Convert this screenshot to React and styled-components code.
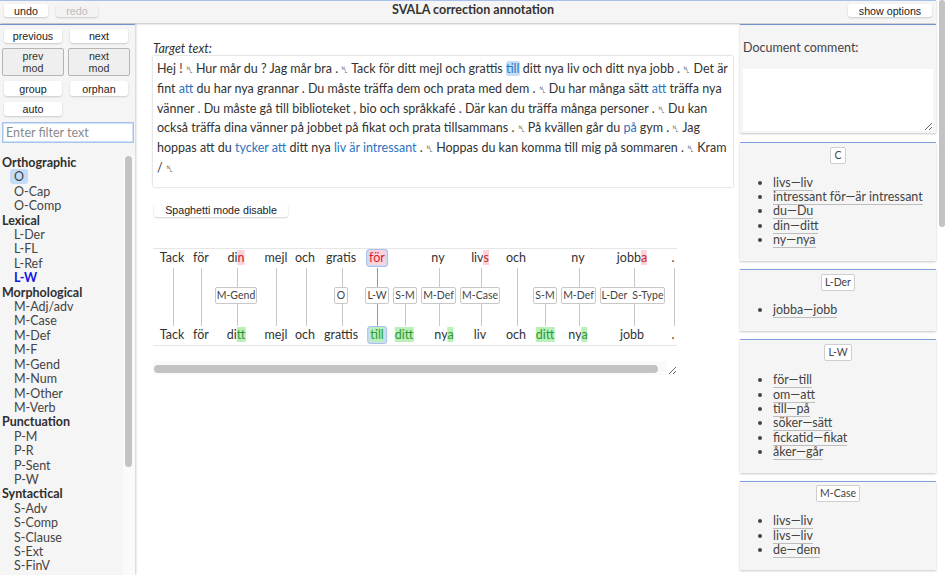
import React from 'react';
import styled, { createGlobalStyle, css } from 'styled-components';

const GlobalStyle = createGlobalStyle`
  html, body { margin: 0; padding: 0; background: #fff; overflow: hidden; }
  body { font-family: Lato, "Liberation Sans", sans-serif; color: #333; }
`;

const Page = styled.div`
  position: relative;
  height: 575px;
  overflow: hidden;
  box-sizing: border-box;
  padding-right: 10px;
  background: #fff;
`;

const PageScrollThumb = styled.div`
  position: absolute;
  top: 0;
  right: 1px;
  width: 6px;
  height: 227px;
  border-radius: 3px;
  background: #c3c3c3;
`;

const Header = styled.header`
  height: 23px;
  box-sizing: border-box;
  border-top: 1px solid #a9c1ef;
  background: #f5f5f5;
  box-shadow: 0 1px 2px rgba(0, 0, 0, 0.25);
  display: flex;
  align-items: flex-start;
  justify-content: space-between;
  padding: 3px 4px 0;
  position: relative;
`;

const HeaderGroup = styled.div`
  display: flex;
  gap: 8px;
`;

const Title = styled.h1`
  position: absolute;
  left: 0;
  right: -10px;
  top: 1px;
  margin: 0;
  text-align: center;
  font-size: 12.5px;
  line-height: 15px;
  font-weight: 700;
  color: #333;
`;

const Button = styled.button`
  font-family: "Liberation Sans", Arial, sans-serif;
  font-size: 10.7px;
  line-height: 12px;
  color: #222;
  height: ${p => p.$h || 14}px;
  width: ${p => (p.$w ? `${p.$w}px` : 'auto')};
  margin: ${p => p.$margin || 0};
  padding: 0;
  border: 0;
  border-radius: 3px;
  background: #fff;
  box-shadow: 0 1px 2px rgba(0, 0, 0, 0.18);
  ${p => p.disabled && css`
    color: #bbb;
    background: #f3f3f3;
  `}
`;

const ModButton = styled(Button)`
  height: 28px;
  background: #efefef;
  border: 1px solid #b5b5b5;
  box-shadow: none;
  border-radius: 2px;
  color: #333;
`;

const Columns = styled.div`
  display: flex;
  align-items: flex-start;
  margin-top: 1px;
`;

const LeftPanel = styled.aside`
  width: 135px;
  height: 551px;
  flex: none;
  box-sizing: border-box;
  border-top: 1px solid #7f9fde;
  background: #f5f5f5;
  box-shadow: 1px 0 2px rgba(0, 0, 0, 0.2);
  display: flex;
  flex-direction: column;
  padding-top: 4px;
`;

const ButtonGrid = styled.div`
  display: grid;
  grid-template-columns: 62px 62px;
  column-gap: 4px;
  row-gap: 5px;
  padding-left: 2px;
`;

const FilterInput = styled.input`
  display: block;
  box-sizing: border-box;
  width: 132px;
  height: 21px;
  margin: 6px 0 13px 2px;
  padding: 0 3px;
  border: 1px solid #a5c4ee;
  outline: 1px solid #cfe0f7;
  outline-offset: -2px;
  background: #fff;
  font-family: Lato, sans-serif;
  font-size: 12.5px;
  &::placeholder { color: #8a8a8a; opacity: 1; }
`;

const TagList = styled.div`
  position: relative;
  flex: 1;
  min-height: 0;
  overflow: hidden;
  padding-left: 2px;
  font-size: 12.5px;
  line-height: 14.4px;
`;

const TagTrack = styled.div`
  position: absolute;
  top: 0;
  bottom: 0;
  right: 0;
  width: 12px;
  background: #fafafa;
`;

const TagThumb = styled.div`
  position: absolute;
  top: 0;
  left: 2px;
  width: 7px;
  height: 311px;
  border-radius: 4px;
  background: #c3c3c3;
`;

const TagGroup = styled.div`
  font-weight: 700;
  color: #2f2f2f;
`;

const Tag = styled.div`
  padding-left: 12px;
  color: ${p => (p.$active ? '#1414e6' : '#444')};
  font-weight: ${p => (p.$active ? 700 : 400)};
`;

const TagMark = styled.span`
  background: ${p => (p.$on ? '#c5dcf8' : 'transparent')};
  border-radius: 3px;
  padding: 0 ${p => (p.$on ? 4 : 0)}px;
  margin-left: ${p => (p.$on ? -4 : 0)}px;
`;

const Main = styled.main`
  flex: 1;
  min-width: 0;
  box-sizing: border-box;
  padding: 17px 7px 0 18px;
`;

const TargetLabel = styled.div`
  font-size: 12.5px;
  line-height: 15px;
  font-style: italic;
  color: #333;
`;

const TargetBox = styled.div`
  box-sizing: border-box;
  height: 131px;
  padding: 4px 4px 2px;
  background: #fff;
  box-shadow: 0 0 2px rgba(0, 0, 0, 0.28);
  font-size: 12.5px;
  line-height: 18.75px;
  color: #333;
`;

const Nl = styled.span`
  font-family: "DejaVu Sans", sans-serif;
  font-size: 9px;
  color: #555;
`;

const Changed = styled.span`
  color: #2a74c0;
  ${p => p.$selected && css`
    background: #c9def6;
    border-radius: 2px;
  `}
`;

const SpaghettiRow = styled.div`
  margin: 16px 0 31px 1px;
  line-height: 0;
`;

const Spaghetti = styled.div`
  position: relative;
  width: 524px;
  height: 127px;
  overflow: hidden;
  resize: both;
`;

const Canvas = styled.div`
  position: relative;
  width: 524px;
  height: 98px;
  box-sizing: border-box;
  border-top: 1px solid #e6e6e6;
  border-bottom: 1px solid #e6e6e6;
  font-size: 12.5px;
  line-height: 16px;
`;

const HScrollTrack = styled.div`
  position: absolute;
  left: 0;
  top: 113px;
  width: 514px;
  height: 14px;
  background: #fafafa;
`;

const HScrollThumb = styled.div`
  position: absolute;
  left: 1px;
  top: 4px;
  width: 504px;
  height: 8px;
  border-radius: 4px;
  background: #c3c3c3;
`;

const Word = styled.span`
  position: absolute;
  left: ${p => p.$x}px;
  top: ${p => p.$y}px;
  transform: translateX(-50%);
  white-space: nowrap;
  color: #333;
  ${p => p.$selected && css`
    padding: 0 2px;
    background: #cbdcf5;
    border: 1px solid #a9c1ea;
    border-radius: 3px;
    margin-top: -1px;
  `}
`;

const Del = styled.span`
  color: #d9202c;
  background: #fbd3da;
`;

const Ins = styled.span`
  color: #2c9a34;
  background: #b9efb9;
`;

const Link = styled.span`
  position: absolute;
  left: ${p => p.$x}px;
  top: ${p => p.$top}px;
  height: ${p => p.$h}px;
  width: 1px;
  background: ${p => (p.$dark ? '#999' : '#c8c8c8')};
`;

const Label = styled.span`
  position: absolute;
  left: ${p => p.$x}px;
  top: 38px;
  width: ${p => p.$w}px;
  height: 17px;
  box-sizing: border-box;
  display: flex;
  align-items: center;
  justify-content: center;
  gap: 5px;
  white-space: nowrap;
  background: #fff;
  border: 1px solid #c8c8c8;
  border-radius: 2px;
  font-size: 10.5px;
  line-height: 15px;
  color: #444;
`;

const RightPanel = styled.aside`
  width: 196px;
  flex: none;
  display: flex;
  flex-direction: column;
  gap: 8.6px;
`;

const Card = styled.section`
  background: #f5f5f5;
  border-top: 1px solid #7f9fde;
  box-shadow: 0 1px 2px rgba(0, 0, 0, 0.22);
  box-sizing: border-box;
`;

const CommentCard = styled(Card)`
  height: 109px;
  padding: 15px 3px 0;
`;

const CommentLabel = styled.div`
  font-size: 12.5px;
  line-height: 16px;
  color: #444;
`;

const CommentBox = styled.textarea`
  display: block;
  box-sizing: border-box;
  width: 190px;
  height: 62px;
  margin: 13px 0 0;
  padding: 0;
  border: 0;
  outline: 0;
  background: #fff;
`;

const CardHead = styled.div`
  display: flex;
  justify-content: center;
  padding-top: ${p => p.$top || 4}px;
`;

const TypeBadge = styled.span`
  box-sizing: border-box;
  height: 17px;
  padding: 0 3px;
  background: #fff;
  border: 1px solid #cfcfcf;
  border-radius: 2px;
  font-size: 10.5px;
  line-height: 15px;
  color: #444;
`;

const CorrectionList = styled.ul`
  margin: 12px 0 13px;
  padding: 0 0 0 33px;
  font-size: 12.5px;
  line-height: 14.4px;
  color: #444;
`;

const Correction = styled.span`
  border-bottom: 1px solid #bdbdbd;
`;

const NL = () => <Nl>␤</Nl>;

const tagGroups = [
  ['Orthographic', ['O', 'O-Cap', 'O-Comp']],
  ['Lexical', ['L-Der', 'L-FL', 'L-Ref', 'L-W']],
  ['Morphological', ['M-Adj/adv', 'M-Case', 'M-Def', 'M-F', 'M-Gend', 'M-Num', 'M-Other', 'M-Verb']],
  ['Punctuation', ['P-M', 'P-R', 'P-Sent', 'P-W']],
  ['Syntactical', ['S-Adv', 'S-Comp', 'S-Clause', 'S-Ext', 'S-FinV']],
];

const sourceWords = [
  { x: 19, text: 'Tack' },
  { x: 48, text: 'för' },
  { x: 83, text: 'di', del: 'n' },
  { x: 123, text: 'mejl' },
  { x: 152, text: 'och' },
  { x: 188, text: 'gratis' },
  { x: 224, del: 'för', selected: true },
  { x: 285, text: 'ny' },
  { x: 327, text: 'liv', del: 's' },
  { x: 363, text: 'och' },
  { x: 425, text: 'ny' },
  { x: 479, text: 'jobb', del: 'a' },
  { x: 520, text: '.' },
];

const targetWords = [
  { x: 19, text: 'Tack' },
  { x: 48, text: 'för' },
  { x: 83, text: 'di', ins: 'tt' },
  { x: 123, text: 'mejl' },
  { x: 152, text: 'och' },
  { x: 188, text: 'grat', ins: 't', rest: 'is' },
  { x: 224, ins: 'till', selected: true },
  { x: 251, ins: 'ditt' },
  { x: 291, text: 'ny', ins: 'a' },
  { x: 327, text: 'liv' },
  { x: 363, text: 'och' },
  { x: 392, ins: 'ditt' },
  { x: 425, text: 'ny', ins: 'a' },
  { x: 479, text: 'jobb' },
  { x: 520, text: '.' },
];

// x, and whether the line starts at the source word or only at the label
const links = [
  { x: 20 }, { x: 48 }, { x: 84, label: true }, { x: 123 }, { x: 153 },
  { x: 189, label: true }, { x: 224, label: true, dark: true }, { x: 252, label: true, below: true },
  { x: 286, label: true }, { x: 328, label: true }, { x: 364 },
  { x: 392, label: true, below: true }, { x: 426, label: true }, { x: 481, label: true }, { x: 521 },
];

const labels = [
  { x: 62, w: 42, tags: ['M-Gend'] },
  { x: 181, w: 14, tags: ['O'] },
  { x: 212, w: 24, tags: ['L-W'] },
  { x: 240, w: 24, tags: ['S-M'] },
  { x: 268, w: 35, tags: ['M-Def'] },
  { x: 307, w: 40, tags: ['M-Case'] },
  { x: 380, w: 24, tags: ['S-M'] },
  { x: 408, w: 35, tags: ['M-Def'] },
  { x: 447, w: 65, tags: ['L-Der', 'S-Type'] },
];

const groups = [
  { type: 'C', items: ['livs—liv', 'intressant för—är intressant', 'du—Du', 'din—ditt', 'ny—nya'] },
  { type: 'L-Der', items: ['jobba—jobb'] },
  { type: 'L-W', items: ['för—till', 'om—att', 'till—på', 'söker—sätt', 'fickatid—fikat', 'åker—går'] },
  { type: 'M-Case', top: 3, items: ['livs—liv', 'livs—liv', 'de—dem'] },
];

const DiffWord = ({ w, y }) => (
  <Word $x={w.x} $y={y} $selected={w.selected}>
    {w.text}
    {w.del && <Del>{w.del}</Del>}
    {w.ins && <Ins>{w.ins}</Ins>}
    {w.rest}
  </Word>
);

const App = () => {
  return (
    <Page>
      <GlobalStyle />
      <PageScrollThumb />
      <Header>
        <HeaderGroup>
          <Button $w={44} $h={13}>undo</Button>
          <Button $w={42} $h={13} disabled>redo</Button>
        </HeaderGroup>
        <Title>SVALA correction annotation</Title>
        <Button $w={84} $h={13}>show options</Button>
      </Header>
      <Columns>
        <LeftPanel>
          <ButtonGrid>
            <Button $margin="0 2px">previous</Button>
            <Button $margin="0 2px">next</Button>
            <ModButton>prev<br />mod</ModButton>
            <ModButton>next<br />mod</ModButton>
            <Button $margin="0 2px" $h={15}>group</Button>
            <Button $margin="0 2px" $h={15}>orphan</Button>
            <Button $margin="1px 2px 0">auto</Button>
          </ButtonGrid>
          <FilterInput placeholder="Enter filter text" />
          <TagList>
            {tagGroups.map(([name, tags]) => (
              <div key={name}>
                <TagGroup>{name}</TagGroup>
                {tags.map(tag => (
                  <Tag key={tag} $active={tag === 'L-W'}>
                    <TagMark $on={tag === 'O'}>{tag}</TagMark>
                  </Tag>
                ))}
              </div>
            ))}
            <TagTrack><TagThumb /></TagTrack>
          </TagList>
        </LeftPanel>

        <Main>
          <TargetLabel>Target text:</TargetLabel>
          <TargetBox>
            Hej ! <NL /> Hur mår du ? Jag mår bra . <NL /> Tack för ditt mejl och grattis <Changed $selected>till</Changed> ditt nya liv och ditt nya jobb . <NL /> Det är
            fint <Changed>att</Changed> du har nya grannar . Du måste träffa dem och prata med dem . <NL /> Du har många sätt <Changed>att</Changed> träffa nya
            vänner <Changed>.</Changed> Du måste gå till biblioteket , bio och språkkafé . Där kan du träffa många personer . <NL /> Du kan
            också träffa dina vänner på jobbet på fikat och prata tillsammans . <NL /> På kvällen går du <Changed>på</Changed> gym . <NL /> Jag
            hoppas att du <Changed>tycker att</Changed> ditt nya <Changed>liv är intressant</Changed> . <NL /> Hoppas du kan komma till mig på sommaren . <NL /> Kram
            / <NL />
          </TargetBox>
          <SpaghettiRow>
            <Button $w={134}>Spaghetti mode disable</Button>
          </SpaghettiRow>
          <Spaghetti>
            <Canvas>
              {sourceWords.map((w, i) => <DiffWord key={i} w={w} y={1} />)}
              {links.map((l, i) => (
                <React.Fragment key={i}>
                  {l.label ? (
                    <>
                      {!l.below && <Link $x={l.x} $top={19} $h={19} $dark={l.dark} />}
                      <Link $x={l.x} $top={55} $h={22} $dark={l.dark} />
                    </>
                  ) : (
                    <Link $x={l.x} $top={19} $h={58} />
                  )}
                </React.Fragment>
              ))}
              {labels.map((l, i) => (
                <Label key={i} $x={l.x} $w={l.w}>
                  {l.tags.map(t => <span key={t}>{t}</span>)}
                </Label>
              ))}
              {targetWords.map((w, i) => <DiffWord key={i} w={w} y={78} />)}
            </Canvas>
            <HScrollTrack><HScrollThumb /></HScrollTrack>
          </Spaghetti>
        </Main>

        <RightPanel>
          <CommentCard>
            <CommentLabel>Document comment:</CommentLabel>
            <CommentBox />
          </CommentCard>
          {groups.map((g, i) => (
            <Card key={i}>
              <CardHead $top={g.top}><TypeBadge>{g.type}</TypeBadge></CardHead>
              <CorrectionList>
                {g.items.map((item, j) => (
                  <li key={j}><Correction>{item}</Correction></li>
                ))}
              </CorrectionList>
            </Card>
          ))}
        </RightPanel>
      </Columns>
    </Page>
  );
};

export default App;
